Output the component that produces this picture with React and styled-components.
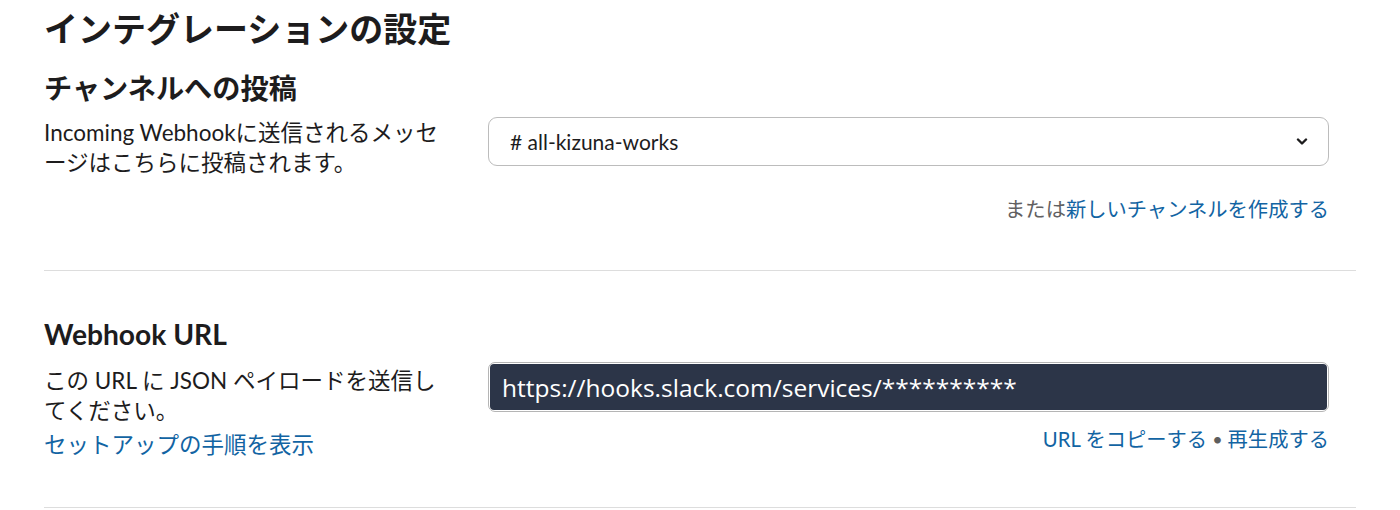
import React from 'react'
import styled, { createGlobalStyle } from 'styled-components'

const GlobalStyle = createGlobalStyle`
  body {
    margin: 0;
    background: #ffffff;
    font-family: Lato, "Noto Sans CJK JP", sans-serif;
    color: #1d1c1d;
  }
`

const Page = styled.div`
  width: 1312px;
  padding: 9px 0 0 44px;
`

const Title = styled.h1`
  margin: 0;
  font-size: 34px;
  line-height: 40px;
  font-weight: 700;
`

const Section = styled.section`
  padding: ${p => (p.$first ? '21px' : '45px')} 0 47px;
  border-bottom: 1px solid #dddddd;
`

const Heading = styled.h2`
  margin: 0;
  font-size: 28.2px;
  line-height: 36px;
  font-weight: 700;
`

const Row = styled.div`
  display: grid;
  grid-template-columns: 400px 841px;
  column-gap: 44px;
  align-items: start;
  margin-top: ${p => p.$top}px;
`

const Description = styled.div`
  padding-top: ${p => p.$pad || 1}px;
  font-size: 22.5px;
  line-height: 30px;
`

const DocLink = styled.a`
  display: block;
  margin-top: 4px;
  color: #1264a3;
  text-decoration: none;
`

const Controls = styled.div`
  display: flex;
  flex-direction: column;
`

const Select = styled.div`
  display: flex;
  align-items: center;
  justify-content: space-between;
  height: 47px;
  padding: 0 20px 0 21px;
  border: 1px solid #bcbcbc;
  border-radius: 9px;
  font-size: 21px;
`

const UrlField = styled.div`
  height: 46px;
  padding: 1px;
  border: 1px solid #b5b5b5;
  border-radius: 7px;
`

const UrlValue = styled.div`
  display: flex;
  align-items: center;
  height: 100%;
  padding-left: 12px;
  background: #2c3548;
  border-radius: 4px;
  color: #ffffff;
  font-family: "Open Sans", "Noto Sans", sans-serif;
  font-size: 24.5px;
  font-weight: 500;
`

const Actions = styled.div`
  display: flex;
  justify-content: flex-end;
  align-items: center;
  gap: 5px;
  margin-top: ${p => p.$top}px;
  font-size: 20.3px;
  line-height: 28px;
  color: #616061;
`

const ActionLink = styled.a`
  color: #1264a3;
  text-decoration: none;
`

const Dot = styled.span`
  color: #5e5e5e;
  font-size: 18px;
`

const Chevron = () => (
  <svg width="12" height="8" viewBox="0 0 12 8" aria-hidden="true">
    <path d="M2 1.5 L6 5.5 L10 1.5" fill="none" stroke="#1d1c1d" strokeWidth="2.4" strokeLinecap="round" strokeLinejoin="round" />
  </svg>
)

export default function App() {
  return (
    <>
      <GlobalStyle />
      <Page>
        <Title>インテグレーションの設定</Title>

        <Section $first>
          <Heading>チャンネルへの投稿</Heading>
          <Row $top={11}>
            <Description>
              Incoming Webhookに送信されるメッセージはこちらに投稿されます。
            </Description>
            <Controls>
              <Select>
                <span># all-kizuna-works</span>
                <Chevron />
              </Select>
              <Actions $top={29}>
                <span>
                  または<ActionLink href="#">新しいチャンネルを作成する</ActionLink>
                </span>
              </Actions>
            </Controls>
          </Row>
        </Section>

        <Section>
          <Heading>Webhook URL</Heading>
          <Row $top={10}>
            <Description $pad={4}>
              この URL に JSON ペイロードを送信してください。
              <DocLink href="#">セットアップの手順を表示</DocLink>
            </Description>
            <Controls>
              <UrlField>
                <UrlValue>https://hooks.slack.com/services/**********</UrlValue>
              </UrlField>
              <Actions $top={13}>
                <ActionLink href="#">URL をコピーする</ActionLink>
                <Dot>•</Dot>
                <ActionLink href="#">再生成する</ActionLink>
              </Actions>
            </Controls>
          </Row>
        </Section>
      </Page>
    </>
  )
}
